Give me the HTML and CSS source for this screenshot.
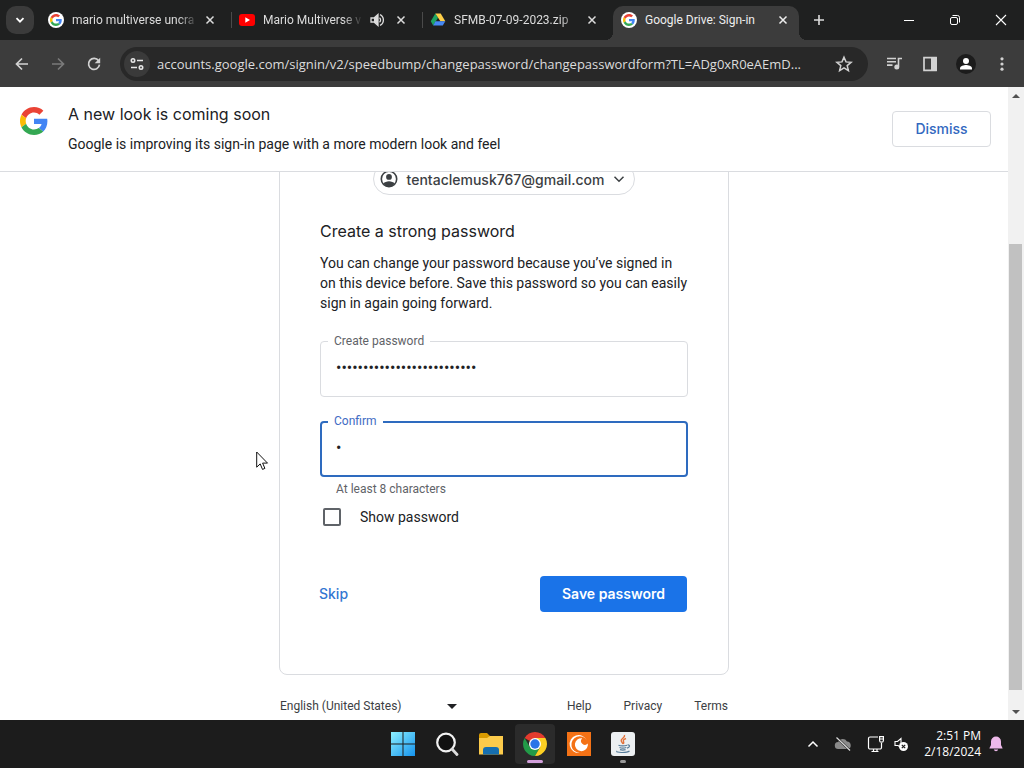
FILE: index.html
```html
<!DOCTYPE html>
<html lang="en">
<head>
<meta charset="UTF-8">
<meta name="viewport" content="width=device-width, initial-scale=1.0">
<title>Google Drive: Sign-in</title>
<link rel="stylesheet" href="styles.css">
</head>
<body>
<svg class="sprite" aria-hidden="true">
  <symbol id="google" viewBox="0 0 48 48">
    <path fill="#ea4335" d="M24 9.5c3.54 0 6.71 1.22 9.21 3.6l6.85-6.85C35.9 2.38 30.47 0 24 0 14.62 0 6.51 5.38 2.56 13.22l7.98 6.19C12.43 13.72 17.74 9.5 24 9.5z"/>
    <path fill="#4285f4" d="M46.98 24.55c0-1.57-.15-3.09-.38-4.55H24v9.02h12.94c-.58 2.96-2.26 5.48-4.78 7.18l7.73 6c4.51-4.18 7.09-10.36 7.09-17.65z"/>
    <path fill="#fbbc05" d="M10.53 28.59c-.48-1.45-.76-2.99-.76-4.59s.27-3.14.76-4.59l-7.98-6.19C.92 16.46 0 20.12 0 24c0 3.88.92 7.54 2.56 10.78l7.97-6.19z"/>
    <path fill="#34a853" d="M24 48c6.48 0 11.93-2.13 15.89-5.81l-7.73-6c-2.15 1.45-4.92 2.3-8.16 2.3-6.26 0-11.57-4.22-13.47-9.91l-7.98 6.19C6.51 42.62 14.62 48 24 48z"/>
  </symbol>
  <symbol id="favicon-google" viewBox="0 0 16 16">
    <circle cx="8" cy="8" r="8" fill="#fff"/>
    <use href="#google" x="2" y="2" width="12" height="12"/>
  </symbol>
  <symbol id="close" viewBox="0 0 16 16">
    <path d="M4.5 4.5l7 7M11.5 4.5l-7 7" fill="none" stroke="currentColor" stroke-width="1.5"/>
  </symbol>
</svg>

<!-- Tab strip -->
<header class="tabs">
  <button class="tab-search" aria-label="Search tabs">
    <svg width="16" height="16" viewBox="0 0 16 16"><path d="M4.5 6.2L8 9.7l3.5-3.5" fill="none" stroke="currentColor" stroke-width="1.8"/></svg>
  </button>
  <div class="tab">
    <svg class="favicon"><use href="#favicon-google"/></svg>
    <span class="tab-title">mario multiverse uncra</span>
    <button class="tab-close" aria-label="Close tab"><svg><use href="#close"/></svg></button>
  </div>
  <div class="tab">
    <svg class="favicon" viewBox="0 0 16 16"><rect y="2" width="16" height="12" rx="3" fill="#f00"/><path d="M6.3 5.2v5.6L11 8z" fill="#fff"/></svg>
    <span class="tab-title">Mario Multiverse v</span>
    <svg class="sound" viewBox="0 0 16 16"><path d="M2 6h3l4-3.5v11L5 10H2z" fill="none" stroke="currentColor" stroke-width="1.3"/><path d="M5 6l4-3v10l-4-3z" fill="currentColor"/><path d="M10.5 5.7a3 3 0 0 1 0 4.6M11 2.6a6 6 0 0 1 0 10.8" fill="none" stroke="currentColor" stroke-width="1.3"/></svg>
    <button class="tab-close" aria-label="Close tab"><svg><use href="#close"/></svg></button>
  </div>
  <div class="tab">
    <svg class="favicon" viewBox="0 0 16 16"><path d="M5.3 1.5L.8 9.3l2.4 4.2L8 5.8z" fill="#1fa463"/><path d="M5.3 1.5h5.4l4.6 7.8h-4.9z" fill="#ffcf48"/><path d="M5.5 9.3h9.8l-2.5 4.2H3.2z" fill="#4688f4"/></svg>
    <span class="tab-title">SFMB-07-09-2023.zip</span>
    <button class="tab-close" aria-label="Close tab"><svg><use href="#close"/></svg></button>
  </div>
  <div class="tab active">
    <svg class="favicon"><use href="#favicon-google"/></svg>
    <span class="tab-title">Google Drive: Sign-in</span>
    <button class="tab-close" aria-label="Close tab"><svg><use href="#close"/></svg></button>
  </div>
  <button class="new-tab" aria-label="New tab">
    <svg width="16" height="16" viewBox="0 0 16 16"><path d="M8 3v10M3 8h10" stroke="currentColor" stroke-width="1.6"/></svg>
  </button>
  <div class="window-controls">
    <button aria-label="Minimize"><svg width="12" height="12" viewBox="0 0 12 12"><path d="M1 6.5h10" stroke="currentColor"/></svg></button>
    <button aria-label="Restore"><svg width="12" height="12" viewBox="0 0 12 12" fill="none" stroke="currentColor"><rect x="1.5" y="3.5" width="7" height="7" rx="1.5"/><path d="M3.5 1.5h5a2 2 0 0 1 2 2v5"/></svg></button>
    <button aria-label="Close"><svg width="12" height="12" viewBox="0 0 12 12"><path d="M1 1l10 10M11 1L1 11" stroke="currentColor" stroke-width="1.1"/></svg></button>
  </div>
</header>

<!-- Toolbar -->
<nav class="toolbar">
  <button class="tool" aria-label="Back"><svg width="16" height="16" viewBox="0 0 16 16"><path d="M14 8H3M8 2.5L2.5 8 8 13.5" fill="none" stroke="currentColor" stroke-width="1.7"/></svg></button>
  <button class="tool" aria-label="Forward" disabled><svg width="16" height="16" viewBox="0 0 16 16"><path d="M2 8h11M8 2.5L13.5 8 8 13.5" fill="none" stroke="currentColor" stroke-width="1.7"/></svg></button>
  <button class="tool" aria-label="Reload"><svg width="16" height="16" viewBox="0 0 16 16"><path d="M12.6 4.8A5.5 5.5 0 1 0 13.5 8.7" fill="none" stroke="currentColor" stroke-width="1.7"/><path d="M14.2 1.8v5.5H8.7z" fill="currentColor"/></svg></button>
  <div class="omnibox">
    <button class="site-info" aria-label="View site information"><svg width="16" height="16" viewBox="0 0 16 16" fill="none" stroke="currentColor" stroke-width="1.6"><circle cx="4" cy="4.5" r="1.7"/><path d="M8 4.5h6M2 11.5h6"/><circle cx="12" cy="11.5" r="1.7"/></svg></button>
    <input class="url" type="text" aria-label="Address" value="accounts.google.com/signin/v2/speedbump/changepassword/changepasswordform?TL=ADg0xR0eAEmD...">
    <button class="star" aria-label="Bookmark this tab"><svg width="18" height="18" viewBox="0 0 18 18"><path d="M9 2.2l2 4.7 5.1.4-3.9 3.3 1.2 5L9 12.9l-4.4 2.7 1.2-5-3.9-3.3 5.1-.4z" fill="none" stroke="currentColor" stroke-width="1.5"/></svg></button>
  </div>
  <button class="tool" aria-label="Media"><svg width="16" height="16" viewBox="0 0 16 16"><path d="M1 2.5h9M1 5.8h9M1 9.1h5.5M12.5 10.5v-8H16" fill="none" stroke="currentColor" stroke-width="1.6"/><circle cx="10.8" cy="11" r="2.5" fill="currentColor"/></svg></button>
  <button class="tool" aria-label="Side panel"><svg width="16" height="16" viewBox="0 0 16 16"><path d="M2 1.7h12v12.6H2z" fill="none" stroke="currentColor" stroke-width="1.7"/><path d="M9 1h6v14H9z" fill="currentColor"/></svg></button>
  <button class="tool" aria-label="Profile"><svg width="20" height="20" viewBox="0 0 20 20"><circle cx="10" cy="10" r="10" fill="#1c1c1c"/><circle cx="10" cy="7" r="3" fill="#fff"/><path d="M4 15.5v-1.3c0-2 4-3.2 6-3.2s6 1.2 6 3.2v1.3z" fill="#fff"/></svg></button>
  <button class="tool" aria-label="Menu"><svg width="16" height="16" viewBox="0 0 16 16" fill="currentColor"><circle cx="8" cy="2.8" r="1.6"/><circle cx="8" cy="8" r="1.6"/><circle cx="8" cy="13.2" r="1.6"/></svg></button>
</nav>

<!-- Page -->
<div class="viewport">
  <div class="page">
    <div class="banner">
      <svg class="banner-logo"><use href="#google"/></svg>
      <div class="banner-text">
        <h1>A new look is coming soon</h1>
        <p>Google is improving its sign-in page with a more modern look and feel</p>
      </div>
      <button class="dismiss">Dismiss</button>
    </div>

    <main class="signin">
      <form class="card">
        <button type="button" class="account">
          <svg width="18" height="18" viewBox="0 0 18 18"><circle cx="9" cy="9" r="7.7" fill="none" stroke="currentColor" stroke-width="1.6"/><circle cx="9" cy="6.9" r="2.9" fill="currentColor"/><path d="M3.3 13.6C4.5 12.2 6.7 11.3 9 11.3s4.5.9 5.7 2.3L12.5 16 9 17l-3.5-1z" fill="currentColor"/></svg>
          <span>tentaclemusk767@gmail.com</span>
          <svg width="12" height="12" viewBox="0 0 12 12"><path d="M1.5 3.8L6 8.3l4.5-4.5" fill="none" stroke="currentColor" stroke-width="1.5"/></svg>
        </button>
        <h2>Create a strong password</h2>
        <p>You can change your password because you’ve signed in on this device before. Save this password so you can easily sign in again going forward.</p>
        <div class="field">
          <input type="password" id="password" value="abcdefghijklmnopqrstuvwxyz">
          <label for="password">Create password</label>
        </div>
        <div class="field focused">
          <input type="password" id="confirm" value="a" aria-describedby="hint">
          <label for="confirm">Confirm</label>
        </div>
        <div class="hint" id="hint">At least 8 characters</div>
        <label class="show"><input type="checkbox"> Show password</label>
        <div class="actions">
          <a href="#">Skip</a>
          <button type="button" class="save">Save password</button>
        </div>
      </form>
      <footer class="footer">
        <div class="language">
          <select aria-label="Language"><option>English (United States)</option></select>
          <svg width="10" height="5" viewBox="0 0 10 5"><path d="M0 0h10L5 5z" fill="#202124"/></svg>
        </div>
        <a href="#">Help</a>
        <a href="#">Privacy</a>
        <a href="#">Terms</a>
      </footer>
    </main>
  </div>
  <div class="scrollbar">
    <svg viewBox="0 0 16 16"><path d="M4 11h8L8 7z" fill="#505050"/></svg>
    <div class="track"><div class="thumb"></div></div>
    <svg viewBox="0 0 16 16"><path d="M4 6h8l-4 4z" fill="#505050"/></svg>
  </div>
</div>

<!-- Taskbar -->
<footer class="taskbar">
  <div class="apps">
    <button aria-label="Start"><svg width="24" height="24" viewBox="0 0 24 24"><defs><linearGradient id="win" x1="0" y1="0" x2="24" y2="24" gradientUnits="userSpaceOnUse"><stop stop-color="#8cf0ff"/><stop offset="1" stop-color="#1593ee"/></linearGradient></defs><path d="M0 0h11.5v11.5H0zM12.5 0H24v11.5H12.5zM0 12.5h11.5V24H0zM12.5 12.5H24V24H12.5z" fill="url(#win)"/></svg></button>
    <button aria-label="Search"><svg width="24" height="24" viewBox="0 0 24 24"><circle cx="11" cy="10.5" r="8.8" fill="#111" stroke="#f2f2f2" stroke-width="2.2"/><path d="M17 17l5 5.5" stroke="#ddd" stroke-width="2.8" stroke-linecap="round"/></svg></button>
    <button aria-label="File Explorer"><svg width="26" height="24" viewBox="0 0 26 24"><path d="M1 3a2 2 0 0 1 2-2h6l3 3h11a2 2 0 0 1 2 2v6H1z" fill="#d99b00"/><path d="M1 6h8l3-2h13v18.5H1z" fill="#fccb4b"/><path d="M5 22.5V18a3 3 0 0 1 3-3h10a3 3 0 0 1 3 3v4.5z" fill="#166fb0"/></svg></button>
    <button class="running" aria-label="Google Chrome"><svg width="24" height="24" viewBox="0 0 24 24"><path d="M12 12L1.61 6A12 12 0 0 1 22.39 6z" fill="#e33b2e"/><path d="M1.61 6A12 12 0 0 0 12 24l5.2-9L12 12 6.8 15z" fill="#229b48"/><path d="M22.39 6A12 12 0 0 1 12 24l5.2-9L12 6z" fill="#fdd023"/><circle cx="12" cy="12" r="6" fill="#fff"/><circle cx="12" cy="12" r="4.7" fill="#2a75e8"/></svg></button>
    <button aria-label="Crunchyroll"><svg width="24" height="24" viewBox="0 0 24 24"><rect width="24" height="24" fill="#f47216"/><path d="M20 8.7A9 9 0 1 0 13 20.9 8.3 8.3 0 1 1 20 8.7z" fill="#fff"/><path d="M20.8 13.5a6.5 6.5 0 1 1-5.6-7.3 3.2 3.2 0 1 0 5.6 5.4z" fill="#fff"/></svg></button>
    <button class="open" aria-label="Java"><svg width="24" height="24" viewBox="0 0 24 24"><rect width="24" height="24" rx="3" fill="#eceff1"/><path d="M13.5 3c1 2.5-3.5 3.5-3.3 5.5.1 1.5 1.3 2.2 1.8 3.5M15 6.5c-2 .8-3.2 1.6-2.5 3 .4.9.5 1.5-.1 2.5" fill="none" stroke="#e2723b" stroke-width="1.4"/><path d="M7.5 13.3c2 .9 6.5.8 8.5 0M8.5 15.5c2 .7 5 .6 6.8 0M9 17.6c1.5.5 4 .5 5.6 0M16.5 13c3-.5 2.5 2.5-.5 3.2M6 19c-2 1.7 9.5 2.3 12.5 0" fill="none" stroke="#557b99" stroke-width="1.2"/></svg></button>
  </div>
  <div class="tray">
    <button aria-label="Show hidden icons"><svg width="12" height="12" viewBox="0 0 12 12"><path d="M1.5 8.5L6 4l4.5 4.5" fill="none" stroke="#fff" stroke-width="1.5"/></svg></button>
    <button aria-label="OneDrive"><svg width="18" height="16" viewBox="0 0 18 16"><path d="M4.5 13a3.5 3.5 0 0 1-.4-7A5 5 0 0 1 13 5.5a3.8 3.8 0 0 1 .8 7.5z" fill="#8a8a8a"/><path d="M2.5 1.5L16 14.5" stroke="#1c1c1c" stroke-width="2.4"/><path d="M2.5 1.5L16 14.5" stroke="#ddd" stroke-width="1.2"/></svg></button>
    <button class="quick" aria-label="Network and volume">
      <svg width="18" height="18" viewBox="0 0 18 18" fill="none" stroke="#fff" stroke-width="1.2"><path d="M11 2H3a1.5 1.5 0 0 0-1.5 1.5v9A1.5 1.5 0 0 0 3 14h10a1.5 1.5 0 0 0 1.5-1.5V8M4.5 16.5h7M6.5 14v2.5M10 14v2.5"/><path d="M12.6 1.6h3.8v3.8c0 1-.7 1.8-1.9 1.8s-1.9-.8-1.9-1.8zM12.6 4h3.8"/></svg>
      <svg width="16" height="16" viewBox="0 0 16 16"><path d="M8 11.5L5 9.5H2v-4h2.5l3.5-3v5" fill="none" stroke="#fff" stroke-width="1.1"/><circle cx="10.5" cy="10.5" r="4.5" fill="#fff"/><path d="M8.8 8.8l3.4 3.4M12.2 8.8l-3.4 3.4" stroke="#1c1c1c" stroke-width="1.2"/></svg>
    </button>
    <button class="clock"><span>2:51 PM</span><span>2/18/2024</span></button>
    <button aria-label="Notifications"><svg width="14" height="16" viewBox="0 0 14 16"><path d="M7 .5a5 5 0 0 0-5 5V9L.5 12v.5h13V12L12 9V5.5a5 5 0 0 0-5-5zM4.8 13.5h4.4a2.3 2.3 0 0 1-4.4 0z" fill="#edb9ea"/></svg></button>
  </div>
</footer>

<svg class="cursor" width="13" height="20" viewBox="0 0 13 20"><path d="M.7 1v15.2l3.5-3.3 2.3 5.5 2.4-1-2.3-5.3h4.9z" fill="#fff" stroke="#111"/></svg>
</body>
</html>
```
FILE: styles.css
```css
* {
  box-sizing: border-box;
}
body {
  margin: 0;
  height: 100vh;
  display: flex;
  flex-direction: column;
  overflow: hidden;
  font-family: Roboto, Arial, sans-serif;
  font-size: 14px;
  color: #202124;
  background-color: #fff;
}
button {
  display: flex;
  align-items: center;
  justify-content: center;
  padding: 0;
  border: none;
  background: none;
  color: inherit;
  font: inherit;
  cursor: pointer;
}
a {
  text-decoration: none;
}
svg {
  flex: none;
}
.sprite {
  position: absolute;
  width: 0;
  height: 0;
}

/* Tab strip */
.tabs {
  display: flex;
  align-items: center;
  flex: none;
  height: 40px;
  padding-left: 6px;
  background-color: #1f2020;
  color: #dcdcdc;
  font-size: 12px;
}
.tab-search {
  width: 28px;
  height: 28px;
  margin-right: 6px;
  border-radius: 10px;
  background-color: #3b3b3b;
  color: #fff;
}
.tab {
  display: flex;
  align-items: center;
  flex: 0 1 191px;
  min-width: 0;
  height: 34px;
  margin-top: 6px;
  padding: 0 13px 6px 8px;
}
.tab + .tab:not(.active) {
  background: linear-gradient(#4a4a4a, #4a4a4a) 0 6px / 1px 16px no-repeat;
}
.tab.active {
  position: relative;
  flex-basis: 186px;
  padding-right: 8px;
  border-radius: 10px 10px 0 0;
  background-color: #3c3c3c;
  color: #eee;
}
/* Flared feet of the active tab */
.tab.active::before, .tab.active::after {
  content: "";
  position: absolute;
  bottom: 0;
  width: 8px;
  height: 8px;
}
.tab.active::before {
  right: 100%;
  background: radial-gradient(circle at 0 0, transparent 8px, #3c3c3c 8px);
}
.tab.active::after {
  left: 100%;
  background: radial-gradient(circle at 100% 0, transparent 8px, #3c3c3c 8px);
}
.favicon {
  width: 16px;
  height: 16px;
  margin-right: 8px;
}
.tab-title {
  flex: 1;
  overflow: hidden;
  white-space: nowrap;
  -webkit-mask-image: linear-gradient(to right, #000 calc(100% - 20px), transparent);
  mask-image: linear-gradient(to right, #000 calc(100% - 20px), transparent);
}
.active .tab-title {
  -webkit-mask-image: none;
  mask-image: none;
}
.sound {
  width: 16px;
  height: 16px;
  margin-left: 6px;
}
.tab-close {
  margin-left: 8px;
}
.tab-title + .tab-close {
  margin-left: 4px;
}
.tab-close svg {
  width: 16px;
  height: 16px;
}
.new-tab {
  width: 28px;
  height: 28px;
  margin-left: 6px;
}
.window-controls {
  display: flex;
  margin-left: auto;
  color: #fff;
}
.window-controls button {
  width: 46px;
  height: 40px;
}

/* Toolbar */
.toolbar {
  display: flex;
  align-items: center;
  flex: none;
  height: 47px;
  padding: 0 4px;
  background-color: #3c3c3c;
  color: #d2d2d2;
}
.tool {
  width: 36px;
  height: 34px;
}
.tool:disabled {
  color: #7a7a7a;
}
.omnibox {
  display: flex;
  align-items: center;
  flex: 1;
  min-width: 0;
  height: 34px;
  margin: 0 8px;
  padding: 0 15px 0 4px;
  border-radius: 17px;
  background-color: #282828;
}
.site-info {
  width: 26px;
  height: 26px;
  border-radius: 50%;
  background-color: #3a3a3a;
  color: #e8e8e8;
}
.url {
  flex: 1;
  min-width: 0;
  margin: 0 14px 0 7px;
  padding: 0;
  border: none;
  outline: none;
  background: none;
  color: #dcdcdc;
  font-family: "Open Sans", sans-serif;
  font-size: 13px;
  text-overflow: ellipsis;
}

/* Page */
.viewport {
  display: flex;
  flex: 1;
  min-height: 0;
}
.page {
  flex: 1;
  min-width: 0;
  overflow: hidden;
}
.banner {
  position: relative;
  z-index: 1;
  display: flex;
  align-items: flex-start;
  height: 85px;
  padding: 15px 17px 0 20px;
  border-bottom: 1px solid #dadce0;
  background-color: #fff;
}
.banner-logo {
  width: 28px;
  height: 28px;
  margin: 5px 20px 0 0;
}
.banner-text {
  flex: 1;
}
h1, h2 {
  margin: 0;
  font-family: Inter, sans-serif;
  font-size: 16px;
  font-weight: 400;
  line-height: 24px;
}
.banner p {
  margin: 8px 0 0;
  line-height: 20px;
}
.dismiss {
  width: 99px;
  height: 36px;
  margin-top: 9px;
  padding-bottom: 2px;
  border: 1px solid #dadce0;
  border-radius: 4px;
  color: #3268c0;
  font-family: Inter, sans-serif;
  font-weight: 500;
}

/* Sign-in card, scrolled part way under the banner */
.signin {
  width: 450px;
  max-width: 100%;
  margin: -40px auto 0;
}
.card {
  padding: 30px 40px 62px;
  border: 1px solid #dadce0;
  border-radius: 8px;
}
.account {
  gap: 9px;
  height: 32px;
  margin: 0 auto;
  padding: 0 9px 0 6px;
  border: 1px solid #dadce0;
  border-radius: 16px;
  color: #3c4043;
  font-family: Inter, sans-serif;
  font-weight: 500;
}
h2 {
  margin-top: 24px;
}
.card p {
  margin: 10px 0 28px;
  line-height: 20px;
}
.field {
  position: relative;
  margin-bottom: 24px;
}
.field input {
  display: block;
  width: 100%;
  height: 56px;
  padding: 0 15px 4px;
  border: 1px solid #dadce0;
  border-radius: 4px;
  outline: none;
  color: #202124;
  font-family: Roboto, sans-serif;
  font-size: 16px;
}
.field label {
  position: absolute;
  top: -8px;
  left: 8px;
  padding: 0 6px;
  background-color: #fff;
  color: #5f6368;
  font-size: 12px;
  line-height: 16px;
}
.field.focused {
  margin-bottom: 4px;
}
.focused input {
  padding: 0 14px 4px;
  border: 2px solid #2e6bbf;
}
.focused label {
  color: #3f6cc4;
}
.hint {
  padding-left: 16px;
  color: #5f6368;
  font-size: 12px;
  line-height: 16px;
}
.show {
  display: flex;
  align-items: center;
  margin-top: 10px;
  line-height: 20px;
}
.show input {
  appearance: none;
  width: 18px;
  height: 18px;
  margin: 0 19px 0 3px;
  border: 2px solid #5f6368;
  border-radius: 2px;
}
.actions {
  display: flex;
  align-items: center;
  justify-content: space-between;
  margin: 49px 1px 0 -1px;
  font-family: Inter, sans-serif;
}
.actions a {
  padding-bottom: 2px;
  color: #3477d2;
  font-weight: 500;
}
.save {
  width: 147px;
  height: 36px;
  padding-bottom: 2px;
  border-radius: 4px;
  background-color: #1a73e8;
  color: #fff;
  font-weight: 600;
}
.footer {
  display: flex;
  align-items: center;
  gap: 32px;
  padding: 23px 1px 0;
  font-size: 12px;
  line-height: 16px;
}
.footer a {
  color: #3c4043;
}
.language {
  display: flex;
  align-items: center;
  flex: 1;
}
.language select {
  appearance: none;
  width: 167px;
  padding: 0;
  border: none;
  background: none;
  color: #3c4043;
  font: inherit;
}
.scrollbar {
  display: flex;
  flex-direction: column;
  width: 16px;
  background-color: #f1f1f1;
}
.scrollbar svg {
  height: 16px;
}
.track {
  display: flex;
  flex-direction: column;
  justify-content: flex-end;
  flex: 1;
  padding: 0 2px 14px 1px;
}
.thumb {
  height: 76%;
  background-color: #c1c1c1;
}

/* Taskbar */
.taskbar {
  display: grid;
  grid-template-columns: 1fr auto 1fr;
  align-items: center;
  flex: none;
  height: 48px;
  padding-left: 1px;
  background-color: #1c1c1c;
  color: #fff;
}
.apps {
  grid-column: 2;
  display: flex;
  gap: 4px;
}
.apps button {
  position: relative;
  width: 40px;
  height: 40px;
  border-radius: 4px;
}
.apps .running {
  background-color: #2b2b2b;
}
.running::after, .open::after {
  content: "";
  position: absolute;
  bottom: 1px;
  left: 50%;
  width: 16px;
  height: 3px;
  border-radius: 2px;
  background-color: #d3a0dc;
  transform: translateX(-50%);
}
.open::after {
  width: 6px;
  background-color: #9a9a9a;
}
.tray {
  display: flex;
  align-items: center;
  justify-content: flex-end;
  gap: 15px;
  padding-right: 21px;
}
.quick {
  gap: 8px;
}
.clock {
  flex-direction: column;
  align-items: flex-end;
  font-family: "Open Sans", sans-serif;
  font-size: 12px;
  line-height: 16px;
}
.clock + button {
  margin-left: -7px;
}

.cursor {
  position: absolute;
  top: 451px;
  left: 256px;
}
```
